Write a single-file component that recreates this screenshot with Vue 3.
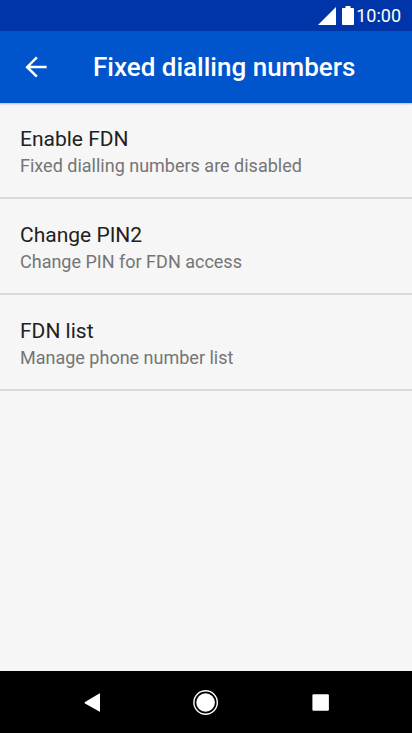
<script setup>
const items = [
  { title: 'Enable FDN', summary: 'Fixed dialling numbers are disabled' },
  { title: 'Change PIN2', summary: 'Change PIN for FDN access' },
  { title: 'FDN list', summary: 'Manage phone number list' },
]
</script>

<template>
  <div class="screen">
    <div class="status">
      <svg class="signal" viewBox="0 0 18 18" aria-hidden="true"><path d="M18 0V18H0Z" /></svg>
      <svg class="battery" viewBox="0 0 12 19" aria-hidden="true"><path d="M3.500 0h5v2H11.200q.8 0 .8.800v15.400q0 .8-.8.800H.8q-.8 0-.8-.8V2.800Q0 2 .8 2h2.700Z" /></svg>
      <span class="clock">10:00</span>
    </div>
    <header class="bar">
      <button class="back" type="button" aria-label="Back">
        <svg viewBox="0 0 24 24" aria-hidden="true"><path d="M20 11.100H7.600l5.700-5.600L12 4.200l-8 7.900 8 7.700 1.300-1.300L7.600 13H20z" /></svg>
      </button>
      <h1>Fixed dialling numbers</h1>
    </header>
    <main class="list">
      <button v-for="item in items" :key="item.title" type="button" class="row">
        <span class="title">{{ item.title }}</span>
        <span class="summary">{{ item.summary }}</span>
      </button>
    </main>
    <nav class="nav">
      <button type="button" aria-label="Back"><svg viewBox="0 0 28 28" aria-hidden="true"><path d="M22.300 5.500Q23 5 23 6V23Q23 24 22.300 23.500L8 15.500Q7 14.700 8 14Z" /></svg></button>
      <button type="button" aria-label="Home"><svg viewBox="0 0 28 28" aria-hidden="true"><circle cx="13.600" cy="14.500" r="11.700" class="ring" /><circle cx="13.600" cy="14.500" r="9.300" /></svg></button>
      <button type="button" aria-label="Recent apps"><svg viewBox="0 0 28 28" aria-hidden="true"><rect x="5.400" y="6.200" width="16.500" height="16.500" rx="1.200" /></svg></button>
    </nav>
  </div>
</template>

<style>
body {
  margin: 0;
  background: #f6f6f6;
}
</style>

<style scoped>
.screen {
  display: flex;
  flex-direction: column;
  min-height: 100vh;
  font-family: Roboto, "Liberation Sans", sans-serif;
  background: #f6f6f6;
}
button {
  border: 0;
  padding: 0;
  background: none;
  font-family: inherit;
  cursor: pointer;
}
svg {
  display: block;
  fill: #fff;
}
.status {
  display: flex;
  align-items: center;
  justify-content: flex-end;
  height: 31px;
  padding-right: 11px;
  background: #0035a9;
  color: #fff;
}
.signal {
  width: 18px;
  height: 18px;
  margin-right: 6px;
}
.battery {
  width: 12px;
  height: 19px;
  margin-right: 2px;
}
.clock {
  font-size: 18px;
  line-height: 31px;
}
.bar {
  display: flex;
  align-items: center;
  height: 72px;
  padding-left: 20px;
  background: #0054cc;
  color: #fff;
  box-shadow: 0 1px 2px rgba(0, 0, 0, 0.25);
}
.back {
  margin-right: 41px;
}
.back svg {
  width: 32px;
  height: 32px;
}
h1 {
  margin: 0;
  font-size: 26px;
  line-height: 32px;
  font-weight: 500;
}
.list {
  flex: 1;
}
.row {
  display: flex;
  flex-direction: column;
  gap: 1px;
  width: 100%;
  box-sizing: border-box;
  padding: 22px 20px 19px;
  border-bottom: 2px solid #d9d9d9;
  text-align: left;
}
.title {
  font-size: 21px;
  line-height: 28px;
  color: #212121;
}
.summary {
  font-size: 18px;
  line-height: 24px;
  color: #757575;
}
.nav {
  display: flex;
  align-items: center;
  justify-content: center;
  gap: 87px;
  height: 62px;
  background: #000;
}
.nav svg {
  width: 28px;
  height: 28px;
}
.ring {
  fill: none;
  stroke: #fff;
  stroke-width: 1.400;
}
</style>
